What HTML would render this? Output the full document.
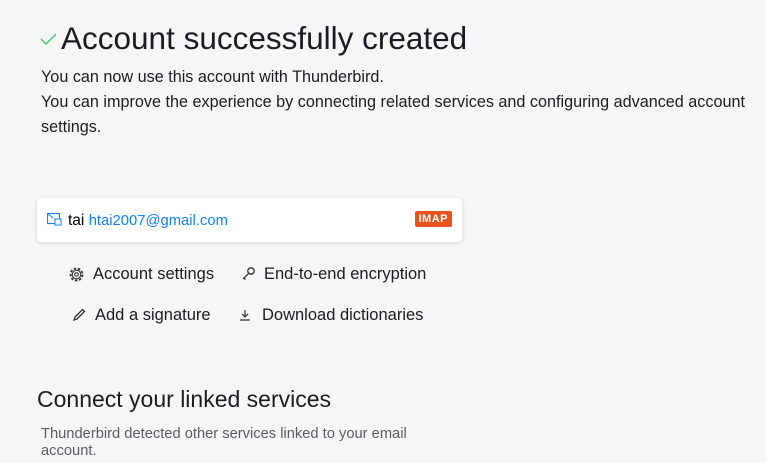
<!DOCTYPE html>
<html><head><style>
body{margin:0;width:766px;height:463px;background:#f6f6f6;font-family:"Liberation Sans",sans-serif;color:#1c1b22;overflow:hidden;position:relative}
.a{position:absolute;white-space:nowrap}
h1{position:absolute;left:61px;top:20px;margin:0;font-weight:300;font-size:31.5px;letter-spacing:0}
.p{left:41px;font-size:16.2px;line-height:25px}
.card{position:absolute;left:37px;top:198px;width:425px;height:44px;background:#fff;border-radius:4px;box-shadow:0 1px 4px rgba(0,0,0,.15)}
.imap{position:absolute;right:10px;top:13px;background:#e8541e;color:#fff;font-size:11px;font-weight:bold;padding:2px 4px;border-radius:2px;letter-spacing:.5px}
.l{font-size:16.5px}
svg{position:absolute}
</style></head><body>
<svg style="left:40px;top:33px" width="18" height="14" viewBox="0 0 18 14"><path d="M1 6l5 5 10-10" fill="none" stroke="#3fc86a" stroke-width="1.4"/></svg>
<h1>Account successfully created</h1>
<div class="a p" style="top:65px">You can now use this account with Thunderbird.</div>
<div class="a p" style="top:90px">You can improve the experience by connecting related services and configuring advanced account</div>
<div class="a p" style="top:115px">settings.</div>
<div class="card">
<svg style="left:10px;top:15px" width="15" height="13" viewBox="0 0 15 13"><rect x="0.5" y="0.5" width="12" height="10" fill="none" stroke="#0a84ff" stroke-width="1.2"/><path d="M1 1l5 4" stroke="#0a84ff" fill="none"/><rect x="8" y="6" width="6" height="6" fill="#fff" stroke="#0a84ff"/></svg>
<div class="a" style="left:31px;top:14px;font-size:15.5px"><span style="color:#000">tai</span> <span style="color:#0a84ff;font-size:14.8px">htai2007@gmail.com</span></div>
<div class="imap">IMAP</div>
</div>
<svg style="left:68px;top:266px" width="17" height="17" viewBox="0 0 17 17"><circle cx="8.5" cy="8.5" r="6" fill="none" stroke="#333" stroke-width="1.8" stroke-dasharray="2.6 1.6"/><circle cx="8.5" cy="8.5" r="4.3" fill="none" stroke="#333" stroke-width="1.1"/><circle cx="8.5" cy="8.5" r="1.8" fill="none" stroke="#333" stroke-width="1.1"/></svg>
<div class="a l" style="left:93px;top:265px">Account settings</div>
<svg style="left:241px;top:266px" width="15" height="15" viewBox="0 0 15 15"><circle cx="10" cy="5" r="3.2" fill="none" stroke="#333" stroke-width="1.3"/><path d="M7.7 7.3L2 13M3 12l1.5 1.5" stroke="#333" stroke-width="1.3" fill="none"/></svg>
<div class="a l" style="left:264px;top:265px">End-to-end encryption</div>
<svg style="left:72px;top:307px" width="15" height="15" viewBox="0 0 15 15"><path d="M2 13l1-3 7.5-7.5 2 2L5 12z" fill="none" stroke="#333" stroke-width="1.3"/></svg>
<div class="a l" style="left:95px;top:306px">Add a signature</div>
<svg style="left:239px;top:309px" width="12" height="12" viewBox="0 0 12 12"><path d="M6 1v7M3 5l3 3 3-3M1 11h10" fill="none" stroke="#333" stroke-width="1.2"/></svg>
<div class="a l" style="left:262px;top:306px">Download dictionaries</div>
<div class="a" style="left:37px;top:386px;font-size:23px;font-weight:300">Connect your linked services</div>
<div class="a" style="left:41px;top:426px;font-size:14.7px;color:#5b5b66;line-height:17px">Thunderbird detected other services linked to your email<br>account.</div>
</body></html>
